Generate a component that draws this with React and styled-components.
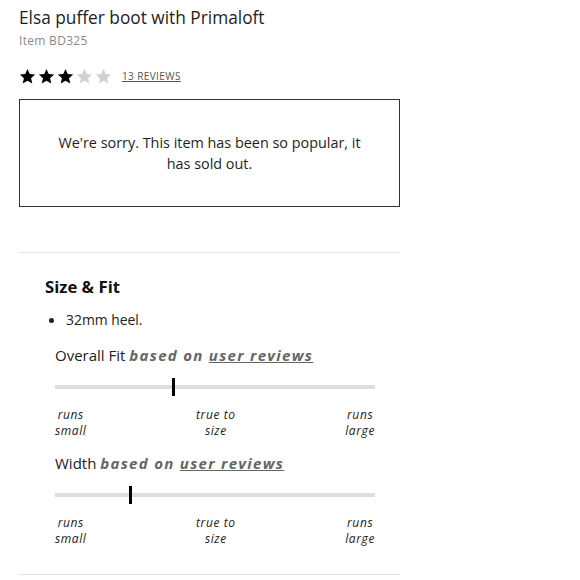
import React from 'react';
import styled, { createGlobalStyle } from 'styled-components';

const Global = createGlobalStyle`
    body {
        margin: 0;
        background: #fff;
        font-family: "Open Sans", Lato, sans-serif;
        color: #222;
    }
`

const Page = styled.div`
    width: 381px;
    padding: 7px 0 0 19px;
`

const Title = styled.h1`
    margin: 0;
    font-size: 17.3px;
    font-weight: 400;
    line-height: 22px;
    color: #1e1e1e;
`

const ItemNo = styled.div`
    font-size: 12px;
    line-height: 16px;
    color: #8a8a8a;
    margin-top: 4px;
    letter-spacing: 0.3px;
`

const RatingRow = styled.div`
    display: flex;
    align-items: center;
    height: 16px;
    margin-top: 19px;
    gap: 10px;
`

const Stars = styled.div`
    display: flex;
    gap: 2px;
`

const Reviews = styled.a`
    font-size: 10px;
    color: #555;
    text-decoration: underline;
    letter-spacing: 0.4px;
`

const SoldOut = styled.div`
    box-sizing: border-box;
    margin-top: 15px;
    height: 108px;
    border: 1px solid #333;
    display: flex;
    align-items: center;
    justify-content: center;
    text-align: center;
    padding: 0 34px;
    font-size: 14.4px;
    line-height: 21px;
    color: #1e1e1e;
`

const Divider = styled.hr`
    border: none;
    border-top: 1px solid #e4e4e4;
    margin: ${p => p.top}px 0 0;
`

const Section = styled.section`
    padding: 23px 0 0 26px;
`

const SectionTitle = styled.h2`
    margin: 0;
    font-size: 16.7px;
    line-height: 22px;
    font-weight: 700;
    color: #111;
`

const Bullets = styled.ul`
    margin: 11px 0 0;
    padding: 0 0 0 21px;
    font-size: 13.9px;
    line-height: 20px;
    li::marker { font-size: 15px; }
`

const FitBlock = styled.div`
    margin: 15px 0 0 10px;
    width: 320px;
    & + & { margin-top: 14px; }
`

const FitLabel = styled.div`
    font-size: 15px;
    line-height: 20px;
    color: #222;
`

const Based = styled.span`
    font-style: italic;
    font-weight: 700;
    color: #666;
    letter-spacing: 1.3px;
`

const UserReviews = styled.span`
    text-decoration: underline;
`

const Track = styled.div`
    position: relative;
    margin-top: 20px;
    height: 4px;
    background: #dedede;
`

const Marker = styled.div`
    position: absolute;
    top: -7px;
    width: 3px;
    height: 18px;
    background: #000;
`

const Scale = styled.div`
    display: flex;
    justify-content: space-between;
    margin-top: 18px;
    font-size: 12px;
    font-style: italic;
    line-height: 16px;
    letter-spacing: 0.6px;
    color: #222;
`

const ScaleItem = styled.span`
    text-align: center;
`

const Star = ({ filled }) => (
    <svg width="17" height="17" viewBox="0 0 24 24">
        <path
            d="M12 1.5l3.2 7.1 7.6.7-5.8 5.1 1.8 7.6L12 18l-6.8 4 1.8-7.6-5.8-5.1 7.6-.7z"
            fill={filled ? '#000' : '#d2d2d2'}
        />
    </svg>
)

const Fit = ({ name, value }) => (
    <FitBlock>
        <FitLabel>
            {name} <Based>based on <UserReviews>user reviews</UserReviews></Based>
        </FitLabel>
        <Track>
            <Marker style={{ left: `${value}%` }} />
        </Track>
        <Scale>
            <ScaleItem>runs<br />small</ScaleItem>
            <ScaleItem>true to<br />size</ScaleItem>
            <ScaleItem>runs<br />large</ScaleItem>
        </Scale>
    </FitBlock>
)

const App = () => {
    return (
        <Page>
            <Global />
            <Title>Elsa puffer boot with Primaloft</Title>
            <ItemNo>Item BD325</ItemNo>
            <RatingRow>
                <Stars>
                    {[1, 2, 3, 4, 5].map(n => <Star key={n} filled={n <= 3} />)}
                </Stars>
                <Reviews>13 REVIEWS</Reviews>
            </RatingRow>
            <SoldOut>We're sorry. This item has been so popular, it has sold out.</SoldOut>
            <Divider top={45} />
            <Section>
                <SectionTitle>Size &amp; Fit</SectionTitle>
                <Bullets>
                    <li>32mm heel.</li>
                </Bullets>
                <Fit name="Overall Fit" value={36.5} />
                <Fit name="Width" value={23} />
            </Section>
            <Divider top={27} />
        </Page>
    );
}

export default App;
